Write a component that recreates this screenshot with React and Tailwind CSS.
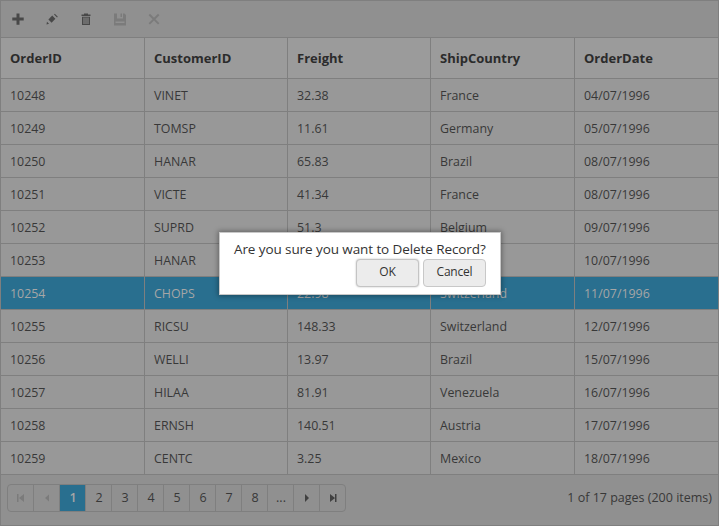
import React from "react";

const headers = ["OrderID", "CustomerID", "Freight", "ShipCountry", "OrderDate"];
const rows = [
  ["10248", "VINET", "32.38", "France", "04/07/1996"],
  ["10249", "TOMSP", "11.61", "Germany", "05/07/1996"],
  ["10250", "HANAR", "65.83", "Brazil", "08/07/1996"],
  ["10251", "VICTE", "41.34", "France", "08/07/1996"],
  ["10252", "SUPRD", "51.3", "Belgium", "09/07/1996"],
  ["10253", "HANAR", "", "", "10/07/1996"],
  ["10254", "CHOPS", "22.98", "Switzerland", "11/07/1996"],
  ["10255", "RICSU", "148.33", "Switzerland", "12/07/1996"],
  ["10256", "WELLI", "13.97", "Brazil", "15/07/1996"],
  ["10257", "HILAA", "81.91", "Venezuela", "16/07/1996"],
  ["10258", "ERNSH", "140.51", "Austria", "17/07/1996"],
  ["10259", "CENTC", "3.25", "Mexico", "18/07/1996"],
];
const pages = ["1", "2", "3", "4", "5", "6", "7", "8", "..."];

function ToolIcon({ children, disabled }) {
  return (
    <svg viewBox="0 0 12 12" className={`size-3 overflow-visible ${disabled ? "text-[#7b7b7b]" : "text-[#484848]"}`} fill="currentColor">
      {children}
    </svg>
  );
}

function Toolbar() {
  return (
    <div className="flex h-[37px] items-center gap-[22px] border-b border-[#7f7f7f] bg-[#909090] pl-[11px]">
      <ToolIcon><path d="M4.500 .5h3v4h4.200v3h-4.200v4.200h-3v-4.200h-4.200v-3h4.200z" /></ToolIcon>
      <ToolIcon>
        <path d="M6.200 2.600l3.200 3.200-3.800 3.900-3.200-3.200z" />
        <path d="M8 1.600l.8-.8 3 3-.8.8z" />
        <path d="M1 8.800l2 2-2.500.7z" />
      </ToolIcon>
      <ToolIcon>
        <path fillRule="evenodd" d="M4 .5h4v1h2.500V3h-9V1.500H4zM2 3.700h8V12H2zM3.500 4.500v6.500h1v-6.500zM5.500 4.500v6.500h1v-6.500zM7.500 4.500v6.500h1v-6.500z" />
      </ToolIcon>
      <ToolIcon disabled><path fillRule="evenodd" d="M0 .500h3v5h6v-5h1.500L12 2v10.500H0zM1.500 8.500V10h9V8.500zM6.500 .500H8v3.500H6.500z" /></ToolIcon>
      <ToolIcon disabled><path d="M2 .8L6 4.800l4-4 1.400 1.400-4 4 4 4L10 11.600l-4-4-4 4-1.400-1.400 4-4-4-4z" /></ToolIcon>
    </div>
  );
}

function PagerArrow({ d, disabled }) {
  return (
    <div className="flex items-center justify-center border-r border-[#7f7f7f] last:border-r-0">
      <svg viewBox="0 0 8 8" className={`size-2 ${disabled ? "text-[#7b7b7b]" : "text-[#404040]"}`} fill="currentColor">
        <path d={d} />
      </svg>
    </div>
  );
}

function Pager() {
  return (
    <div className="flex h-[50px] items-center justify-between bg-[#909090] pr-[6px] pb-1 pl-[6px]">
      <div className="grid h-7 w-[339px] grid-cols-[26px_26px_26px_26px_26px_26px_26px_26px_26px_26px_26px_26px_25px] overflow-hidden rounded-[4px] border border-[#7f7f7f] text-[12.5px]">
        <PagerArrow disabled d="M0 0h1.500v8H0zM7 0v8L2 4z" />
        <PagerArrow disabled d="M6 .5v7L2 4z" />
        {pages.map((p) => (
          <div
            key={p}
            className={`flex items-center justify-center border-r border-[#7f7f7f] pt-px pl-px ${p === "1" ? "bg-[#296f8f] font-semibold text-[#a6a6a6]" : ""}`}
          >
            {p}
          </div>
        ))}
        <PagerArrow d="M2 0v8L6 4z" />
        <PagerArrow d="M1 0v8L6 4zM6 0h1.500v8H6z" />
      </div>
      <span className="text-[12.5px]">1 of 17 pages (200 items)</span>
    </div>
  );
}

function ConfirmDialog() {
  return (
    <div className="absolute top-[231px] left-[218px] h-[63px] w-[282px] border border-[#c8c8c8] bg-white pt-[7px] pr-[14px] pl-[14px] text-[#333] shadow-[0_0_5px_1px_rgba(0,0,0,0.35)]">
      <div className="h-[19px] text-[13.5px] leading-[18px] tracking-[-0.09px] whitespace-nowrap">Are you sure you want to Delete Record?</div>
      <div className="flex justify-end gap-1 text-[12px]">
        <button className="h-7 w-[63px] rounded-[4px] border border-[#c4c4c4] bg-[#ececec] pb-[2px] shadow-[0_0_2px_#bbb]">OK</button>
        <button className="h-7 w-[63px] rounded-[4px] border border-[#c8c8c8] bg-[#ececec] pb-[2px] tracking-[-0.2px]">Cancel</button>
      </div>
    </div>
  );
}

const columns = "grid grid-cols-[144px_143px_143px_144px_143px] border-b border-[#7f7f7f]";
const cell = "flex items-center border-r border-[#7f7f7f] pt-[2px] pl-[9px] last:border-r-0";

export default function App() {
  return (
    <div className="relative h-[526px] w-[719px] overflow-hidden border border-[#7f7f7f] bg-[#989898] font-['Open_Sans','Noto_Sans',sans-serif] text-[#383838]">
      <Toolbar />
      <div className={`${columns} h-[41px] bg-[#9b9b9b] text-[13px] font-bold text-[#2b2b2b]`}>
        {headers.map((h) => <div key={h} className={cell}>{h}</div>)}
      </div>
      {rows.map((row) => (
        <div
          key={row[0]}
          className={`${columns} h-[33px] text-[12.4px] ${row[0] === "10254" ? "bg-[#296f8f] text-[#a6a6a6]" : "bg-[#989898]"}`}
        >
          {row.map((value, i) => <div key={i} className={cell}>{value}</div>)}
        </div>
      ))}
      <Pager />
      <ConfirmDialog />
    </div>
  );
}
